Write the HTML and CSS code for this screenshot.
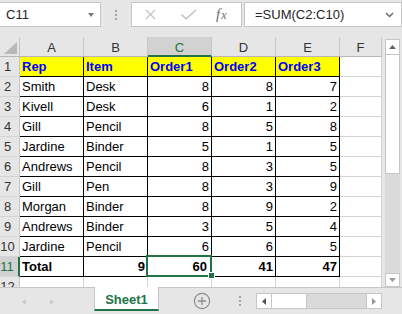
FILE: index.html
```html
<!DOCTYPE html>
<html lang="en">
<head>
    <meta charset="UTF-8">
    <meta name="viewport" content="width=device-width, initial-scale=1.0">
    <title>Sheet1 - Excel</title>
    <link rel="stylesheet" href="styles.css">
</head>
<body>
    <div class="formula-bar">
        <div class="name-box">
            <span>C11</span>
            <span class="caret"></span>
        </div>
        <div class="grip"><i></i><i></i><i></i></div>
        <div class="fx-buttons">
            <svg class="ic-cancel" width="11" height="11" viewBox="0 0 11 11"><path d="M1 1 L10 10 M10 1 L1 10" stroke="#c4c4c4" stroke-width="1.3" fill="none"/></svg>
            <svg class="ic-enter" width="17" height="11" viewBox="0 0 17 11"><path d="M1.5 5.5 L6 9.8 L16 1" stroke="#c4c4c4" stroke-width="1.6" fill="none"/></svg>
            <span class="fx">f<span class="fx-x">x</span></span>
        </div>
        <div class="formula-input">
            <span>=SUM(C2:C10)</span>
            <svg width="9" height="6" viewBox="0 0 9 6"><path d="M1 1 L4.5 4.5 L8 1" stroke="#6a6a6a" stroke-width="1.5" fill="none"/></svg>
        </div>
    </div>

    <div class="workspace">
        <div class="grid">
            <div class="col-head corner"><span class="corner-tri"></span></div>
            <div class="col-head">A</div>
            <div class="col-head">B</div>
            <div class="col-head active">C</div>
            <div class="col-head">D</div>
            <div class="col-head">E</div>
            <div class="col-head">F</div>

            <div class="row-head">1</div>
            <div class="cell tb title">Rep</div>
            <div class="cell tb title">Item</div>
            <div class="cell tb title">Order1</div>
            <div class="cell tb title">Order2</div>
            <div class="cell tb title">Order3</div>
            <div class="cell"></div>

            <div class="row-head">2</div>
            <div class="cell tb">Smith</div>
            <div class="cell tb">Desk</div>
            <div class="cell tb num">8</div>
            <div class="cell tb num">8</div>
            <div class="cell tb num">7</div>
            <div class="cell"></div>

            <div class="row-head">3</div>
            <div class="cell tb">Kivell</div>
            <div class="cell tb">Desk</div>
            <div class="cell tb num">6</div>
            <div class="cell tb num">1</div>
            <div class="cell tb num">2</div>
            <div class="cell"></div>

            <div class="row-head">4</div>
            <div class="cell tb">Gill</div>
            <div class="cell tb">Pencil</div>
            <div class="cell tb num">8</div>
            <div class="cell tb num">5</div>
            <div class="cell tb num">8</div>
            <div class="cell"></div>

            <div class="row-head">5</div>
            <div class="cell tb">Jardine</div>
            <div class="cell tb">Binder</div>
            <div class="cell tb num">5</div>
            <div class="cell tb num">1</div>
            <div class="cell tb num">5</div>
            <div class="cell"></div>

            <div class="row-head">6</div>
            <div class="cell tb">Andrews</div>
            <div class="cell tb">Pencil</div>
            <div class="cell tb num">8</div>
            <div class="cell tb num">3</div>
            <div class="cell tb num">5</div>
            <div class="cell"></div>

            <div class="row-head">7</div>
            <div class="cell tb">Gill</div>
            <div class="cell tb">Pen</div>
            <div class="cell tb num">8</div>
            <div class="cell tb num">3</div>
            <div class="cell tb num">9</div>
            <div class="cell"></div>

            <div class="row-head">8</div>
            <div class="cell tb">Morgan</div>
            <div class="cell tb">Binder</div>
            <div class="cell tb num">8</div>
            <div class="cell tb num">9</div>
            <div class="cell tb num">2</div>
            <div class="cell"></div>

            <div class="row-head">9</div>
            <div class="cell tb">Andrews</div>
            <div class="cell tb">Binder</div>
            <div class="cell tb num">3</div>
            <div class="cell tb num">5</div>
            <div class="cell tb num">4</div>
            <div class="cell"></div>

            <div class="row-head">10</div>
            <div class="cell tb">Jardine</div>
            <div class="cell tb">Pencil</div>
            <div class="cell tb num">6</div>
            <div class="cell tb num">6</div>
            <div class="cell tb num">5</div>
            <div class="cell"></div>

            <div class="row-head active">11</div>
            <div class="cell tb bold">Total</div>
            <div class="cell tb bold num">9</div>
            <div class="cell tb bold num selected">60<span class="sel-box"></span><span class="fill-handle"></span></div>
            <div class="cell tb bold num">41</div>
            <div class="cell tb bold num">47</div>
            <div class="cell"></div>

            <div class="row-head">12</div>
            <div class="cell"></div>
            <div class="cell"></div>
            <div class="cell"></div>
            <div class="cell"></div>
            <div class="cell"></div>
            <div class="cell"></div>
        </div>

        <div class="vscroll">
            <div class="sb-btn up"><svg width="7" height="4" viewBox="0 0 7 4"><path d="M0 4 L3.5 0 L7 4 Z" fill="#666"/></svg></div>
            <div class="sb-thumb"></div>
            <div class="sb-track"></div>
            <div class="sb-btn down"><svg width="7" height="4" viewBox="0 0 7 4"><path d="M0 0 L7 0 L3.5 4 Z" fill="#9a9a9a"/></svg></div>
        </div>
    </div>

    <div class="tabbar">
        <div class="tab-nav">
            <svg width="4" height="6" viewBox="0 0 4 6"><path d="M4 0 L0 3 L4 6 Z" fill="#cacaca"/></svg>
            <svg width="4" height="6" viewBox="0 0 4 6"><path d="M0 0 L4 3 L0 6 Z" fill="#cacaca"/></svg>
        </div>
        <div class="sheet-tab">Sheet1</div>
        <svg class="add-sheet" width="18" height="18" viewBox="0 0 18 18">
            <circle cx="9" cy="9" r="7.6" stroke="#8c8c8c" stroke-width="1.2" fill="none"/>
            <path d="M9 5 V13 M5 9 H13" stroke="#8c8c8c" stroke-width="1.3"/>
        </svg>
        <div class="grip tab-grip"><i></i><i></i><i></i></div>
        <div class="hscroll">
            <div class="sb-btn left"><svg width="4" height="7" viewBox="0 0 4 7"><path d="M4 0 L0 3.5 L4 7 Z" fill="#555"/></svg></div>
            <div class="sb-thumb"></div>
            <div class="sb-track"></div>
            <div class="sb-btn right"><svg width="4" height="7" viewBox="0 0 4 7"><path d="M0 0 L4 3.5 L0 7 Z" fill="#9a9a9a"/></svg></div>
        </div>
    </div>
</body>
</html>
```

FILE: styles.css
```css
* {
    margin: 0;
    padding: 0;
    box-sizing: border-box;
}

body {
    width: 402px;
    height: 314px;
    overflow: hidden;
    background: #e6e6e6;
    font-family: 'Liberation Sans', Arial, sans-serif;
    font-size: 13px;
    color: #000;
}

/* formula bar */

.formula-bar {
    height: 37px;
    display: flex;
    align-items: flex-start;
    padding-top: 2px;
}

.name-box {
    width: 102px;
    height: 25px;
    margin-left: -1px;
    background: #fff;
    border: 1px solid #c6c6c6;
    display: flex;
    align-items: center;
    justify-content: space-between;
    padding: 0 6px 0 6px;
    color: #262626;
}

.caret {
    width: 0;
    height: 0;
    border-left: 3px solid transparent;
    border-right: 3px solid transparent;
    border-top: 4px solid #777;
}

.grip {
    width: 30px;
    height: 25px;
    display: flex;
    flex-direction: column;
    align-items: center;
    justify-content: center;
    gap: 2px;
}

.grip i {
    display: block;
    width: 2px;
    height: 2px;
    background: #a2a2a2;
}

.fx-buttons {
    width: 111px;
    height: 25px;
    background: #fff;
    border: 1px solid #c6c6c6;
    display: flex;
    align-items: center;
}

.ic-cancel { margin-left: 13px; }
.ic-enter { margin-left: 24px; }

.fx {
    margin-left: 19px;
    font-family: 'Liberation Serif', 'Times New Roman', serif;
    font-style: italic;
    font-size: 15px;
    color: #6c6c6c;
    margin-top: -1px;
}

.fx-x {
    font-size: 12px;
    margin-left: 1px;
}

.formula-input {
    width: 158px;
    height: 25px;
    margin-left: 2px;
    background: #fff;
    border: 1px solid #c6c6c6;
    display: flex;
    align-items: center;
    justify-content: space-between;
    padding: 0 7px 0 10px;
    color: #262626;
}

/* sheet */

.workspace {
    height: 250px;
    display: flex;
}

.grid {
    width: 382px;
    height: 250px;
    overflow: hidden;
    background: #fff;
    display: grid;
    grid-template-columns: 20px repeat(5, 64px) 42px;
    grid-auto-rows: 20px;
}

.col-head {
    background: #e6e6e6;
    border-right: 1px solid #c6c6c6;
    border-bottom: 1px solid #b6b6b6;
    text-align: center;
    line-height: 21px;
    color: #333;
}

.col-head.active {
    background: #d2d2d2;
    color: #217346;
    border-bottom: 2px solid #217346;
}

.corner {
    display: flex;
    justify-content: flex-end;
    align-items: flex-end;
    padding: 0 2px 2px 0;
}

.corner-tri {
    width: 0;
    height: 0;
    border-left: 13px solid transparent;
    border-bottom: 12px solid #b8b8b8;
}

.row-head {
    background: #e6e6e6;
    border-right: 1px solid #c6c6c6;
    border-bottom: 1px solid #d4d4d4;
    text-align: center;
    padding-right: 4px;
    line-height: 20px;
    color: #333;
}

.row-head.active {
    background: #d2d2d2;
    color: #217346;
    border-right: 2px solid #217346;
}

.cell {
    border-right: 1px solid #d4d4d4;
    border-bottom: 1px solid #d4d4d4;
    padding: 0 2px;
    line-height: 19px;
    white-space: nowrap;
}

.cell.tb {
    border-right-color: #000;
    border-bottom-color: #000;
}

.title {
    background: #ffff00;
    color: #0000ff;
    font-weight: bold;
}

.num { text-align: right; }
.bold { font-weight: bold; }

.selected {
    position: relative;
    padding-right: 4px;
}

.sel-box {
    position: absolute;
    left: -2px;
    top: -2px;
    width: 66px;
    height: 22px;
    border: 2px solid #217346;
}

.fill-handle {
    position: absolute;
    left: 61px;
    top: 16px;
    width: 5px;
    height: 5px;
    background: #217346;
    outline: 1px solid #fff;
}

/* scrollbars */

.vscroll {
    width: 20px;
    display: flex;
    flex-direction: column;
    padding: 2px 2px 0 3px;
}

.sb-btn {
    background: #fff;
    border: 1px solid #c6c6c6;
    display: flex;
    align-items: center;
    justify-content: center;
}

.vscroll .up { height: 16px; }
.vscroll .down { height: 14px; }

.vscroll .sb-thumb {
    height: 119px;
    background: #fff;
    border: 1px solid #c6c6c6;
    border-top: none;
}

.sb-track {
    flex: 1;
    background: #dadada;
}

/* tabs */

.tabbar {
    height: 27px;
    border-top: 1px solid #c6c6c6;
    display: flex;
    align-items: flex-start;
}

.tab-nav {
    width: 94px;
    height: 25px;
    display: flex;
    align-items: center;
    padding-left: 22px;
    gap: 24px;
    padding-top: 2px;
}

.sheet-tab {
    width: 65px;
    height: 24px;
    margin-top: -1px;
    background: #fff;
    border-left: 1px solid #c6c6c6;
    border-right: 1px solid #c6c6c6;
    border-bottom: 2px solid #217346;
    text-align: center;
    font-weight: bold;
    color: #217346;
    line-height: 22px;
    padding-top: 2px;
}

.add-sheet {
    margin-left: 34px;
    margin-top: 4px;
}

.tab-grip {
    width: 2px;
    margin-left: 28px;
    height: 14px;
    margin-top: 6px;
}

.hscroll {
    width: 126px;
    height: 16px;
    margin-left: 15px;
    margin-top: 5px;
    display: flex;
    border: 1px solid #c6c6c6;
}

.hscroll .sb-btn {
    width: 15px;
    border: none;
}

.hscroll .left { border-right: 1px solid #c6c6c6; }
.hscroll .right { border-left: 1px solid #c6c6c6; }

.hscroll .sb-thumb {
    width: 35px;
    background: #fff;
    border-right: 1px solid #c6c6c6;
}
```
